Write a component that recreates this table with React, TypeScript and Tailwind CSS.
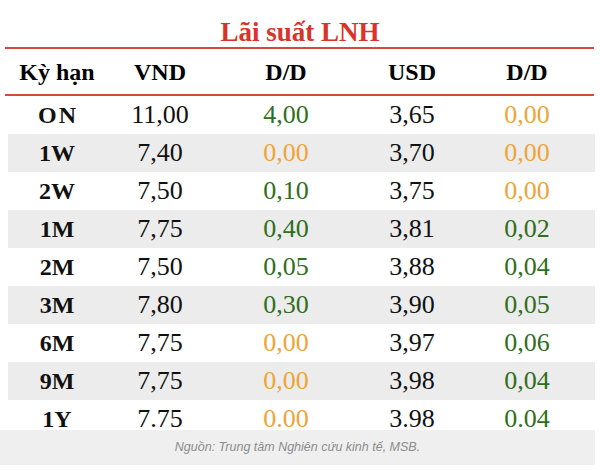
import React from 'react';

type Tone = 'up' | 'flat';

interface RateRow {
  term: string;
  vnd: string;
  vndChange: string;
  vndTone: Tone;
  usd: string;
  usdChange: string;
  usdTone: Tone;
}

const rows: RateRow[] = [
  { term: 'ON', vnd: '11,00', vndChange: '4,00', vndTone: 'up', usd: '3,65', usdChange: '0,00', usdTone: 'flat' },
  { term: '1W', vnd: '7,40', vndChange: '0,00', vndTone: 'flat', usd: '3,70', usdChange: '0,00', usdTone: 'flat' },
  { term: '2W', vnd: '7,50', vndChange: '0,10', vndTone: 'up', usd: '3,75', usdChange: '0,00', usdTone: 'flat' },
  { term: '1M', vnd: '7,75', vndChange: '0,40', vndTone: 'up', usd: '3,81', usdChange: '0,02', usdTone: 'up' },
  { term: '2M', vnd: '7,50', vndChange: '0,05', vndTone: 'up', usd: '3,88', usdChange: '0,04', usdTone: 'up' },
  { term: '3M', vnd: '7,80', vndChange: '0,30', vndTone: 'up', usd: '3,90', usdChange: '0,05', usdTone: 'up' },
  { term: '6M', vnd: '7,75', vndChange: '0,00', vndTone: 'flat', usd: '3,97', usdChange: '0,06', usdTone: 'up' },
  { term: '9M', vnd: '7,75', vndChange: '0,00', vndTone: 'flat', usd: '3,98', usdChange: '0,04', usdTone: 'up' },
  { term: '1Y', vnd: '7.75', vndChange: '0.00', vndTone: 'flat', usd: '3.98', usdChange: '0.04', usdTone: 'up' },
];

const toneClass = (tone: Tone) => (tone === 'up' ? 'text-[#2f6e22]' : 'text-[#eea43a]');

const serif = { fontFamily: '"Liberation Serif", "Times New Roman", serif' };

const App: React.FC = () => {
  return (
    <div className="relative w-[600px] h-[470px] bg-white overflow-hidden" style={serif}>
      {/* Title */}
      <div className="h-[47px] pt-[18px] text-center">
        <h1 className="text-[27px] leading-[29px] font-bold text-[#d9332a]">Lãi suất LNH</h1>
      </div>

      <div className="ml-[5px] w-[589px] h-[2px] bg-[#d6473f]" />

      {/* Header */}
      <div className="ml-[8px] w-[587px] h-[45px] grid grid-cols-[98px_108px_144px_108px_122px] items-center text-center text-[24px] leading-none font-bold text-black">
        <div>Kỳ hạn</div>
        <div>VND</div>
        <div>D/D</div>
        <div>USD</div>
        <div>D/D</div>
      </div>

      <div className="ml-[5px] w-[589px] h-[2px] bg-[#d6473f]" />

      {/* Rows */}
      <div className="flex flex-col">
        {rows.map((r, i) => (
          <div
            key={r.term}
            className={`ml-[8px] w-[587px] h-[38px] grid grid-cols-[98px_108px_144px_108px_122px] items-center text-center text-[26px] leading-none text-[#111] ${
              i % 2 === 1 ? 'bg-[#ececec]' : 'bg-white'
            }`}
          >
            <div className={`text-[24px] font-bold ${r.term === 'ON' ? 'tracking-[2px] pl-[2px]' : ''}`}>{r.term}</div>
            <div>{r.vnd}</div>
            <div className={toneClass(r.vndTone)}>{r.vndChange}</div>
            <div>{r.usd}</div>
            <div className={toneClass(r.usdTone)}>{r.usdChange}</div>
          </div>
        ))}
      </div>

      {/* Source caption, overlapping the last row */}
      <div className="absolute left-0 top-[430px] w-[595px] h-[35px] bg-[#efefef] flex items-center justify-center">
        <p
          className="text-[12.5px] italic text-[#8c8c8c] leading-none"
          style={{ fontFamily: '"Liberation Sans", Arial, sans-serif' }}
        >
          Nguồn: Trung tâm Nghiên cứu kinh tế, MSB.
        </p>
      </div>
    </div>
  );
};

export default App;
